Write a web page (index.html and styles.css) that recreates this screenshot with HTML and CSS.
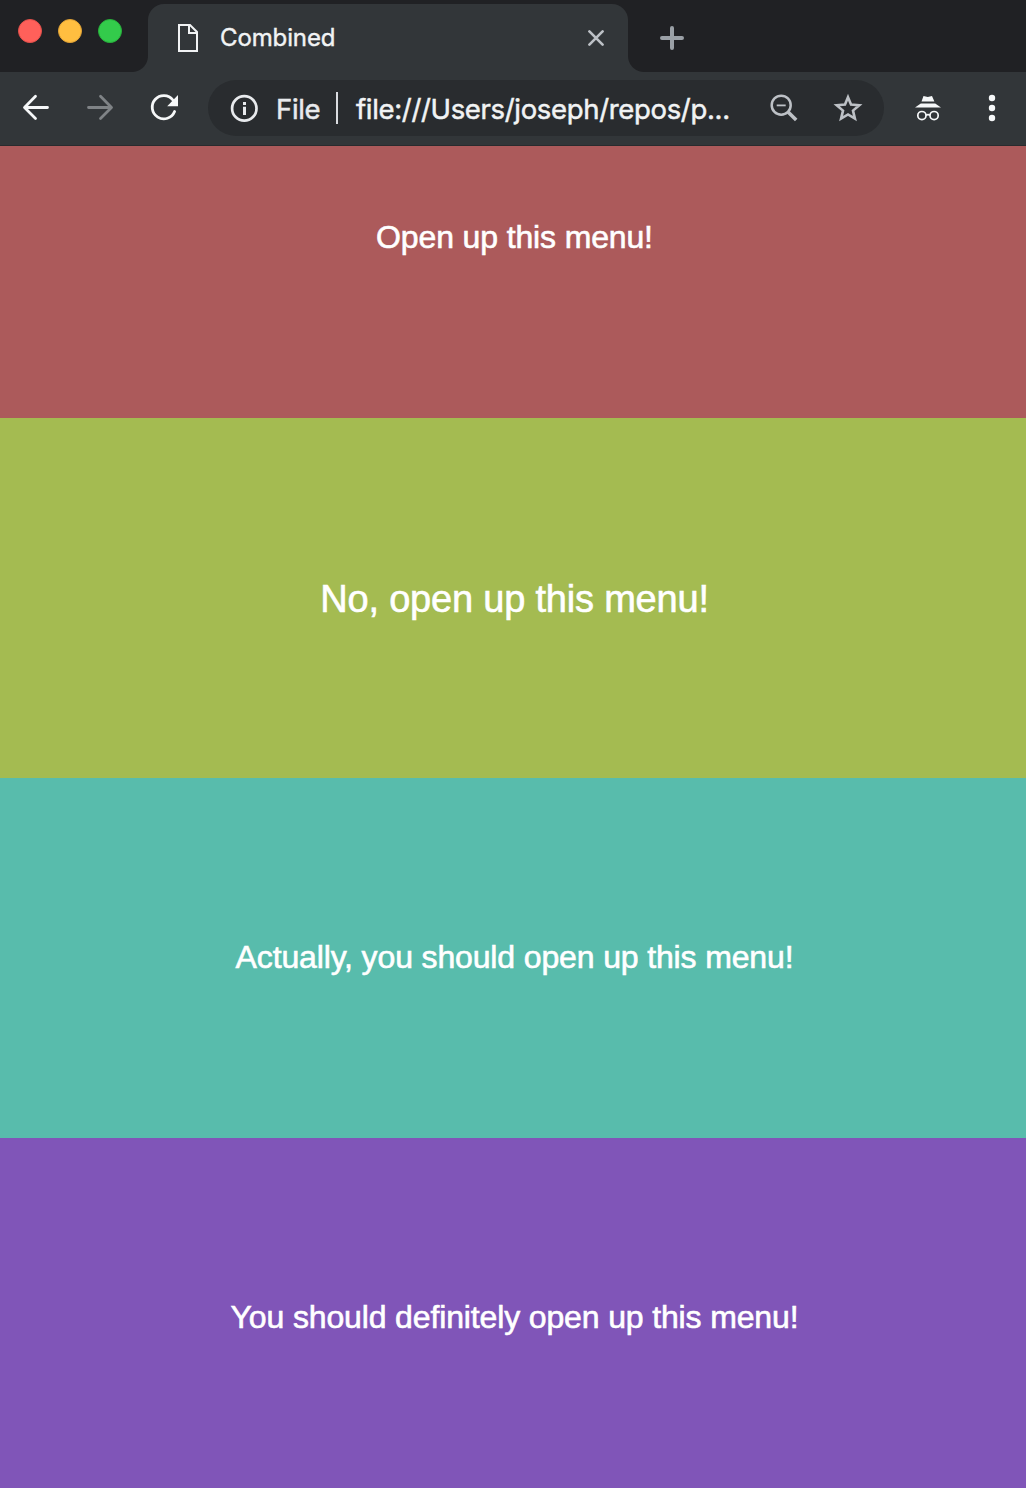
FILE: index.html
```html
<!DOCTYPE html>
<html lang="en">
<head>
<meta charset="utf-8">
<title>Combined</title>
<link rel="stylesheet" href="styles.css">
</head>
<body>
<header class="browser">
  <div class="tabstrip">
    <div class="lights">
      <span class="light light-red"></span>
      <span class="light light-yellow"></span>
      <span class="light light-green"></span>
    </div>
    <div class="tab">
      <svg width="20" height="28" viewBox="0 0 20 28" fill="none" stroke="#f1f3f4" stroke-width="2"><path d="M1 1H12L19 8V27H1Z"/><path d="M11 1V9H19"/></svg>
      <span class="tab-title">Combined</span>
      <svg width="16" height="16" viewBox="0 0 16 16" fill="none" stroke="#bdc1c6" stroke-width="2.6" stroke-linecap="round"><path d="M1.4 1.4L14.6 14.6M14.6 1.4L1.4 14.6"/></svg>
    </div>
    <svg class="new-tab" width="24" height="24" viewBox="0 0 24 24" fill="none" stroke="#9aa0a6" stroke-width="4" stroke-linecap="round"><path d="M12 2V22M2 12H22"/></svg>
  </div>
  <div class="toolbar">
    <svg class="nav" width="32" height="32" viewBox="0 0 32 32" fill="none" stroke="#f6f8f9" stroke-width="2.8" stroke-linecap="round" stroke-linejoin="round"><path d="M27.5 15.5H4.7M15.5 4.3L4.5 15.5L15.5 26.5"/></svg>
    <svg class="nav" width="32" height="32" viewBox="0 0 32 32" fill="none" stroke="#7f8386" stroke-width="2.8" stroke-linecap="round" stroke-linejoin="round"><path d="M4.5 15.5H27.3M16.5 4.3L27.5 15.5L16.5 26.5"/></svg>
    <svg class="reload" width="32" height="32" viewBox="0 0 32 32" fill="none"><path d="M24.9 8A11.6 11.6 0 1 0 26.6 19.5" stroke="#f6f8f9" stroke-width="2.8" stroke-linecap="round"/><path d="M30 3V14.2H19.2Z" fill="#f6f8f9"/></svg>
    <div class="omnibox">
      <svg width="28" height="28" viewBox="0 0 28 28" fill="none"><circle cx="14.3" cy="14.4" r="12.2" stroke="#e8eaed" stroke-width="2.7"/><path d="M13 8H16V11H13ZM13 12.8H16V21H13Z" fill="#e8eaed"/></svg>
      <span class="scheme">File</span>
      <span class="divider"></span>
      <span class="url">file:///Users/joseph/repos/p...</span>
      <svg class="zoom-out" width="28" height="28" viewBox="0 0 28 28" fill="none" stroke="#bdc1c6"><circle cx="11.2" cy="11.2" r="9.5" stroke-width="2.5"/><path d="M6.7 11.4H15.7" stroke-width="1.8"/><path d="M17.8 17.8L26.2 26" stroke-width="3.6"/></svg>
      <svg width="30" height="30" viewBox="0 0 30 30" fill="none" stroke="#bdc1c6" stroke-width="2.6"><path d="M15 4.2L18 11.5L26.3 12.2L20 17.6L21.9 25.6L15 21.4L8.1 25.6L10 17.6L3.7 12.2L12 11.5Z"/></svg>
    </div>
    <svg class="incognito" width="26" height="26" viewBox="0 0 26 26" fill="none"><path d="M8.5 1L12.8 2.1L17 1L19.4 6.6H6.5Z" fill="#f6f8f9"/><path d="M5.8 8.4H20.2L26 12.6H0Z" fill="#f6f8f9"/><circle cx="6.9" cy="20.6" r="4.1" stroke="#f6f8f9" stroke-width="1.7"/><circle cx="19.1" cy="20.6" r="4.1" stroke="#f6f8f9" stroke-width="1.7"/><path d="M10.8 20.2Q13 19 15.2 20.2" stroke="#f6f8f9" stroke-width="1.6"/></svg>
    <svg class="more" width="8" height="28" viewBox="0 0 8 28" fill="#f6f8f9"><circle cx="4" cy="4" r="3.2"/><circle cx="4" cy="14" r="3.2"/><circle cx="4" cy="24" r="3.2"/></svg>
  </div>
</header>
<main class="menus">
  <section class="menu menu-red"><span class="label">Open up this menu!</span></section>
  <section class="menu menu-green"><span class="label label-large">No, open up this menu!</span></section>
  <section class="menu menu-teal"><span class="label">Actually, you should open up this menu!</span></section>
  <section class="menu menu-purple"><span class="label">You should definitely open up this menu!</span></section>
</main>
</body>
</html>
```
FILE: styles.css
```css
* { box-sizing: border-box; }
body { margin: 0; height: 1488px; overflow: hidden; font-family: "Liberation Sans", Arial, sans-serif; }
svg { display: block; flex: none; }
.browser { height: 146px; background: #323639; border-bottom: 1px solid #292b2e; font-family: Inter, Roboto, sans-serif; }
.tabstrip { display: flex; height: 72px; background: #202124; }
.lights { display: flex; gap: 16px; width: 148px; padding: 19px 0 0 18px; }
.light { width: 24px; height: 24px; border-radius: 50%; }
.light-red { background: #ff605a; border: 1px solid #e2504b; }
.light-yellow { background: #ffbe40; border: 1px solid #e0a236; }
.light-green { background: #33cb4b; border: 1px solid #27b03b; }
.tab { position: relative; display: flex; align-items: center; width: 480px; height: 68px; margin-top: 4px; padding: 0 24px 0 30px; border-radius: 16px 16px 0 0; background: #323639; }
.tab::before, .tab::after { content: ""; position: absolute; bottom: 0; width: 16px; height: 16px; }
.tab::before { left: -16px; background: radial-gradient(circle at 0 0, transparent 15.5px, #323639 16.5px); }
.tab::after { right: -16px; background: radial-gradient(circle at 100% 0, transparent 15.5px, #323639 16.5px); }
.tab-title { flex: 1; margin-left: 22px; color: #f1f3f4; font-size: 24px; line-height: 30px; letter-spacing: -0.12px; -webkit-text-stroke: 0.4px #f1f3f4; }
.new-tab { margin: 26px 0 0 32px; }
.toolbar { display: flex; align-items: center; height: 72px; padding: 0 30px 0 20px; }
.nav { margin-right: 32px; }
.reload { margin-right: 28px; }
.omnibox { display: flex; flex: none; align-items: center; width: 676px; height: 56px; padding: 0 21px 0 22px; border-radius: 28px; background: #292c2f; font-size: 27.5px; line-height: 34px; letter-spacing: -0.33px; }
.scheme { width: 60px; margin-left: 18px; padding-top: 1px; color: #e8eaed; -webkit-text-stroke: 0.5px #e8eaed; }
.divider { width: 2px; height: 32px; background: #dadce0; }
.url { flex: 1; margin-left: 18px; padding-top: 1px; color: #f1f3f4; white-space: nowrap; -webkit-text-stroke: 0.5px #f1f3f4; }
.zoom-out { margin-right: 35px; }
.incognito { margin-left: 31px; }
.more { margin-left: 47px; }
.menus { color: #fff; text-align: center; }
.menu { display: flex; justify-content: center; align-items: center; height: 360px; padding: 0 0 2px 3px; }
.menu-red { height: 272px; padding-bottom: 90px; background: #ac5a5b; }
.menu-green { padding: 2px 0 0 3px; background: #a4bb51; }
.menu-teal { background: #58bcac; }
.menu-purple { background: #8055b8; }
.label { font-size: 32px; line-height: 38px; letter-spacing: -0.14px; white-space: nowrap; -webkit-text-stroke: 0.6px #fff; }
.label-large { font-size: 38px; line-height: 44px; letter-spacing: -0.2px; }
```
